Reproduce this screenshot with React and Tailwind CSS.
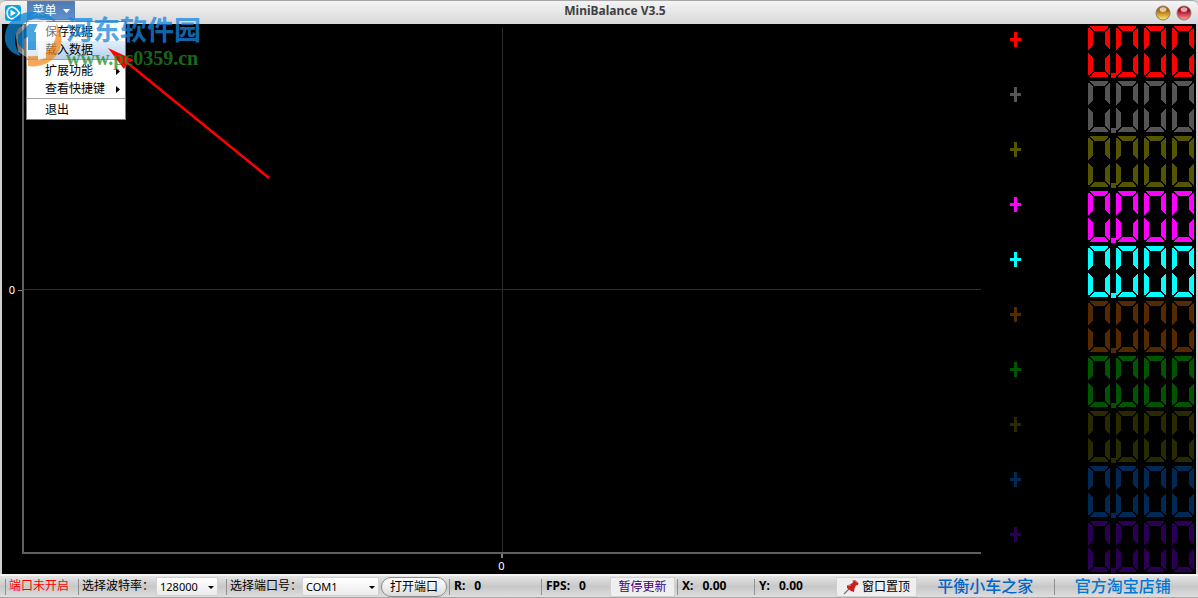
const channels = [
    { id: 1, color: 'text-[#ff0000]' },
    { id: 2, color: 'text-[#555555]' },
    { id: 3, color: 'text-[#555500]' },
    { id: 4, color: 'text-[#ff00ff]' },
    { id: 5, color: 'text-[#00ffff]' },
    { id: 6, color: 'text-[#552a00]' },
    { id: 7, color: 'text-[#005500]' },
    { id: 8, color: 'text-[#2a2a00]' },
    { id: 9, color: 'text-[#002a55]' },
    { id: 10, color: 'text-[#2a0055]' }
];

const menuGroups = [
    [{ label: '保存数据' }, { label: '载入数据', active: true }],
    [{ label: '扩展功能', sub: true }, { label: '查看快捷键', sub: true }],
    [{ label: '退出' }]
];

const Logo = () => (
    <svg viewBox="0 0 16 16" className="w-4 h-4" aria-hidden="true">
        <rect width="16" height="16" rx="3" fill="#0aa3e6" />
        <path d="M7 2.2C10 2.2 12 4.6 14.4 8 12 11.4 10 13.8 7 13.8 3.8 13.8 2.2 11 2.2 8S3.8 2.2 7 2.2Z" fill="none" stroke="#fff" strokeWidth="1.7" />
        <path d="M5.5 4.8 11 8 5.5 11.2Z" fill="#fff" />
    </svg>
);

const Orb = ({ label, color }) => {
    const [dark, light] = color;
    const id = `orb-${label}`;
    return (
        <button type="button" aria-label={label} className="w-4 h-4">
            <svg viewBox="0 0 16 16" className="w-4 h-4">
                <defs>
                    <linearGradient id={id} x1="0" y1="0" x2="0" y2="1">
                        <stop offset="0.3" stopColor={dark} />
                        <stop offset="1" stopColor={light} />
                    </linearGradient>
                </defs>
                <circle cx="8" cy="8" r="7" fill={`url(#${id})`} stroke="#8d7a78" />
                <ellipse cx="8" cy="4.6" rx="3.4" ry="2.4" fill="#fff" opacity="0.65" />
            </svg>
        </button>
    );
};

const Pin = () => (
    <svg viewBox="0 0 16 16" className="w-4 h-4" aria-hidden="true">
        <path d="M6 10 1 15" stroke="#777" strokeWidth="1.2" />
        <path d="M4 6.5 7 5.5 10 3.5 9.5 1.5 12 1 15.5 4 15 6 13 6.2 11.5 9.5 11 13 8 12 4 9Z" fill="#c9201f" />
        <path d="M10 2 12 1.5 14.5 4M5 7 8 6" stroke="#f07a70" fill="none" />
    </svg>
);

// One seven segment zero, the middle bar is off
const Zero = () => (
    <>
        <path d="M2 0H20V1L16 5H6L2 1Z" />
        <path d="M0 2H1L5 6V19L0 24Z" />
        <path d="M22 2H21L17 6V19L22 24Z" />
        <path d="M0 27 5 32V45L1 49H0Z" />
        <path d="M22 27 17 32V45L21 49H22Z" />
        <path d="M6 46H16L20 50V51H2V50Z" />
    </>
);

const Channel = ({ color }) => (
    <div className="flex-1 flex items-start justify-between pt-[2px] pl-[29px] pr-[2px]">
        <svg width="11" height="15" className={`mt-[6px] ${color}`} fill="currentColor" shapeRendering="crispEdges">
            <path d="M4 0H7V6H11V9H7V15H4V9H0V6H4Z" />
        </svg>
        <svg width="106" height="52" className={color} fill="currentColor" shapeRendering="crispEdges" role="img" aria-label="+0.000">
            {[0, 28, 56, 84].map((x) => (
                <g key={x} transform={`translate(${x} 0)`}>
                    <Zero />
                </g>
            ))}
            <path d="M23 47H28V52H23Z" />
        </svg>
    </div>
);

const Menu = () => (
    <ul className="absolute left-[26px] top-[21px] z-10 w-[100px] bg-white border border-[#808080] pt-px text-xs leading-[18px]" role="menu">
        {menuGroups.map((group, i) => (
            <li key={i} className={i > 0 ? 'border-t border-[#a0a0a0] pt-[2px]' : ''}>
                {group.map((item) => (
                    <button
                        key={item.label}
                        type="button"
                        role="menuitem"
                        className={`flex w-full h-[18px] items-center justify-between pl-[18px] pr-[5px] ${item.active ? 'bg-linear-to-b from-[#e3eefb] to-[#b5d0ef]' : ''}`}
                    >
                        {item.label}
                        {item.sub && (
                            <svg width="4" height="7" aria-hidden="true">
                                <path d="M0 0 4 3.5 0 7Z" />
                            </svg>
                        )}
                    </button>
                ))}
            </li>
        ))}
    </ul>
);

const Pointer = () => (
    <svg width="170" height="140" className="absolute left-[104px] top-[44px] z-20 pointer-events-none" aria-hidden="true">
        <path d="M20 16 165 134" stroke="#ff0000" strokeWidth="2.6" />
        <path d="M4 4 30 16 24 19 20 25Z" fill="#ff0000" />
    </svg>
);

const Watermark = () => (
    <div className="absolute left-[4px] top-[10px] z-30 flex gap-[2px] opacity-75 pointer-events-none">
        <svg width="60" height="58" aria-hidden="true">
            <path d="M11 20 30 8 52 14 55 34 42 48 24 48 14 42Z" fill="#fff" opacity="0.6" />
            <path d="M1 30C0 14 12 2 28 2 40 2 48 6 52 12 44 8 36 7 29 9 18 12 11 20 11 30 11 36 13 41 17 46 8 44 2 38 1 30Z" fill="#0e86d4" />
            <path d="M14 25 25 14H36V22H32V40H24V27L20 29V40L14 34Z" fill="#0e86d4" />
            <path d="M52 13C62 27 58 46 43 53 37 56 30 57 24 56V46C31 47 37 46 42 42 51 35 54 25 52 13Z" fill="#f58a1f" />
            <path d="M34 13 42 10V48L34 50V22L30 22Z" fill="#fff" />
        </svg>
        <div>
            <p className="pt-[4px] text-[27px] leading-[32px] font-bold text-[#1686e0]">河东软件园</p>
            <p className="text-[20px] leading-[24px] font-bold text-[#228b22] font-['Liberation_Serif',serif]">www.pc0359.cn</p>
        </div>
    </div>
);

const Plot = () => (
    <div className="flex-1 flex flex-col">
        <div className="flex-1 flex">
            <div className="w-5 pt-[2px] flex items-center justify-end text-white text-[11px]">
                <span className="pr-[3px]">0</span>
                <span className="w-1 h-px bg-[#808080]" />
            </div>
            <div className="flex-1 pt-[2px] border-l-2 border-b-2 border-[#606060]">
                <svg width="100%" height="100%" className="block" shapeRendering="crispEdges">
                    <line x1="0" x2="100%" y1="50%" y2="50%" stroke="#2c2c2c" />
                    <line x1="50%" x2="50%" y1="2" y2="100%" stroke="#2c2c2c" />
                </svg>
            </div>
        </div>
        <div className="h-5 pl-5 flex flex-col items-center text-white text-[11px] leading-[16px]">
            <span className="w-[2px] h-1 bg-[#808080]" />
            0
        </div>
    </div>
);

const Divider = () => <span className="w-px h-4 bg-[#909090] shrink-0" />;

const Dropdown = ({ id, value, className }) => (
    <span className={`relative h-[19px] shrink-0 ${className}`}>
        <select
            id={id}
            defaultValue={value}
            className="appearance-none w-full h-full pl-[3px] border border-[#d2d2d2] rounded-xs bg-linear-to-b from-white to-[#ececec] text-[11px] leading-[16px]"
        >
            <option>{value}</option>
        </select>
        <svg width="6" height="3" className="absolute right-[4px] top-[9px] pointer-events-none" aria-hidden="true">
            <path d="M0 0H6L3 3Z" />
        </svg>
    </span>
);

const Readout = ({ label, value, className }) => (
    <span className={`flex gap-[9px] pl-1 pb-[2px] text-xs font-bold shrink-0 ${className}`}>
        <span>{label}:</span>
        <span>{value}</span>
    </span>
);

const StatusBar = () => (
    <footer className="h-6 flex items-center border-t-2 border-b border-t-[#f4f4f4] border-b-[#a8a8a8] bg-linear-to-b from-[#e4e4e4] via-[#c8c8c8] to-[#dedede] pl-[5px] pr-[7px] whitespace-nowrap overflow-hidden">
        <Divider />
        <span className="w-[72px] pl-[3px] pb-[2px] text-[#ff0000]">端口未开启</span>
        <Divider />
        <label htmlFor="baud" className="w-[77px] pl-[3px] pb-[2px]">选择波特率：</label>
        <Dropdown id="baud" value="128000" className="w-[62px]" />
        <span className="w-2" />
        <Divider />
        <label htmlFor="port" className="w-[75px] pl-[3px] pb-[2px]">选择端口号：</label>
        <Dropdown id="port" value="COM1" className="w-[77px]" />
        <button type="button" className="mx-[2px] w-[66px] h-[20px] shrink-0 rounded-full border border-[#8c8c8c] bg-linear-to-b from-white to-[#dcdcdc]">打开端口</button>
        <Divider />
        <Readout label="R" value="0" className="w-[91px]" />
        <Divider />
        <Readout label="FPS" value="0" className="w-[68px]" />
        <button type="button" className="w-[65px] h-[20px] shrink-0 border border-[#d2d2d2] bg-[#efefef] text-[#400080]">暂停更新</button>
        <span className="w-[2px]" />
        <Divider />
        <Readout label="X" value="0.00" className="w-[76px]" />
        <Divider />
        <Readout label="Y" value="0.00" className="w-[81px]" />
        <button type="button" className="w-[81px] h-[20px] shrink-0 flex items-center justify-center gap-[3px] border border-[#d2d2d2] bg-[#efefef]">
            <Pin />
            窗口置顶
        </button>
        <a href="#home" className="flex-1 pb-[2px] text-center text-base leading-5 text-[#0066cc] font-medium">平衡小车之家</a>
        <Divider />
        <a href="#shop" className="flex-1 pb-[2px] text-center text-base leading-5 text-[#0078d8] font-medium">官方淘宝店铺</a>
    </footer>
);

const App = () => (
    <div className="relative min-h-screen flex flex-col bg-[#d0d0d0] text-xs text-black font-['Noto_Sans','Noto_Sans_CJK_SC',sans-serif]">
        <header className="h-6 flex items-center rounded-t-md border-t border-[#a8a8a8] bg-linear-to-b from-[#f4f4f4] to-[#d8d8d8] pl-[5px] pr-[6px]">
            <Logo />
            <button type="button" className="ml-[6px] h-[19px] self-start w-12 flex items-center justify-center gap-[6px] border border-[#5c7fb0] bg-linear-to-b from-[#4f7ab3] to-[#5f92cf] text-white">
                菜单
                <svg width="7" height="4" fill="currentColor" aria-hidden="true">
                    <path d="M0 0H7L3.5 4Z" />
                </svg>
            </button>
            <h1 className="flex-1 pb-1 text-center text-xs font-bold text-[#404040]">MiniBalance V3.5</h1>
            <div className="flex gap-[5px]">
                <Orb label="minimize" color={['#a86400', '#ffee70']} />
                <Orb label="close" color={['#a80018', '#ffa0a0']} />
            </div>
        </header>
        <main className="flex-1 flex mx-[2px] bg-black">
            <Plot />
            <div className="w-[215px] flex flex-col">
                {channels.map((ch) => (
                    <Channel key={ch.id} color={ch.color} />
                ))}
            </div>
        </main>
        <StatusBar />
        <Menu />
        <Pointer />
        <Watermark />
    </div>
);

export default App;
